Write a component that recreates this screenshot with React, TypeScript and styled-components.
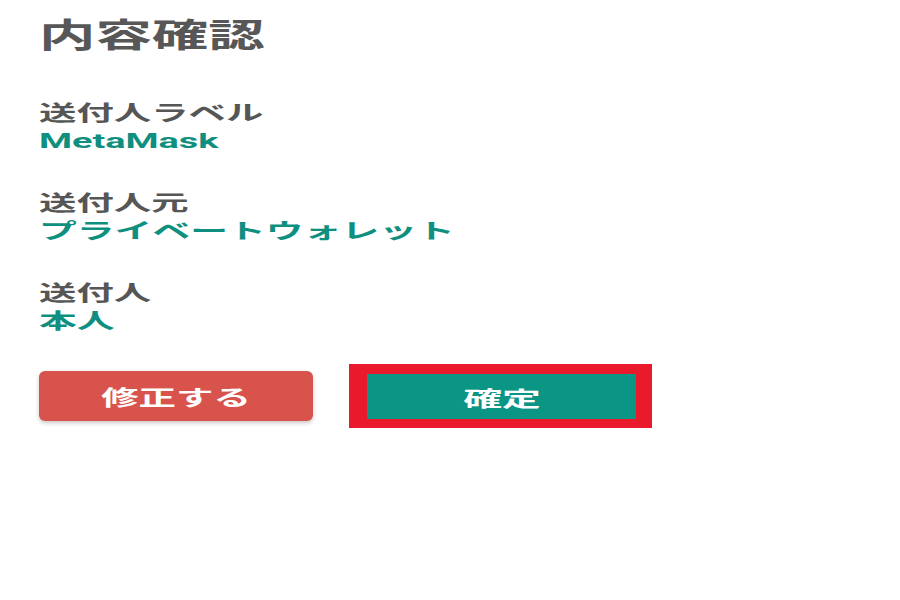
import { createGlobalStyle, styled } from "styled-components";

const GlobalStyle = createGlobalStyle`
  body {
    margin: 0;
    background: #ffffff;
    font-family: "Roboto", "Noto Sans CJK JP", sans-serif;
  }
`;

const Page = styled.div`
  display: flex;
  flex-direction: column;
  padding: 16px 0 0 39px;
`;

// the screenshot is stretched sideways, so each text is widened with scaleX
const Stretch = styled.span<{ $scale: number; $origin?: string }>`
  display: inline-block;
  white-space: nowrap;
  transform: scaleX(${(p) => p.$scale});
  transform-origin: ${(p) => p.$origin ?? "left"} center;
`;

const Title = styled.h1`
  margin: 0 0 43px;
  font-size: 33px;
  line-height: 40px;
  font-weight: 700;
  color: #575757;
`;

const Field = styled.div`
  display: flex;
  flex-direction: column;
  margin-bottom: 34px;
`;

const Label = styled.div`
  font-size: 21px;
  line-height: 28px;
  font-weight: 700;
  color: #565656;
`;

const Value = styled.div`
  font-size: 21px;
  line-height: 28px;
  font-weight: 700;
  color: #0f8f80;
`;

const ButtonRow = styled.div`
  display: flex;
  align-items: center;
  gap: 36px;
  margin-top: -5px;
`;

const FixButton = styled.button`
  width: 274px;
  height: 50px;
  border: none;
  border-radius: 6px;
  background: #d9534d;
  color: #ffffff;
  font-family: inherit;
  font-size: 21px;
  font-weight: 700;
  box-shadow: 0 2px 4px rgba(0, 0, 0, 0.22);
  display: flex;
  align-items: center;
  justify-content: center;
`;

const Highlight = styled.div`
  border-style: solid;
  border-color: #e91a2b;
  border-width: 10px 16px 9px 18px;
  display: flex;
`;

const ConfirmButton = styled.button`
  width: 269px;
  height: 45px;
  border: none;
  background: #0b9584;
  color: #ffffff;
  font-family: inherit;
  font-size: 21px;
  font-weight: 700;
  display: flex;
  align-items: center;
  justify-content: center;
`;

type Item = { label: string; value: string };

const items: Item[] = [
  { label: "送付人ラベル", value: "MetaMask" },
  { label: "送付人元", value: "プライベートウォレット" },
  { label: "送付人", value: "本人" },
];

function App() {
  return (
    <>
      <GlobalStyle />
      <Page>
        <Title>
          <Stretch $scale={1.71}>内容確認</Stretch>
        </Title>
        {items.map((item) => (
          <Field key={item.label}>
            <Label>
              <Stretch $scale={1.78}>{item.label}</Stretch>
            </Label>
            <Value>
              <Stretch $scale={1.8}>{item.value}</Stretch>
            </Value>
          </Field>
        ))}
        <ButtonRow>
          <FixButton>
            <Stretch $scale={1.78} $origin="center">
              修正する
            </Stretch>
          </FixButton>
          <Highlight>
            <ConfirmButton>
              <Stretch $scale={1.85} $origin="center">
                確定
              </Stretch>
            </ConfirmButton>
          </Highlight>
        </ButtonRow>
      </Page>
    </>
  );
}

export default App;
